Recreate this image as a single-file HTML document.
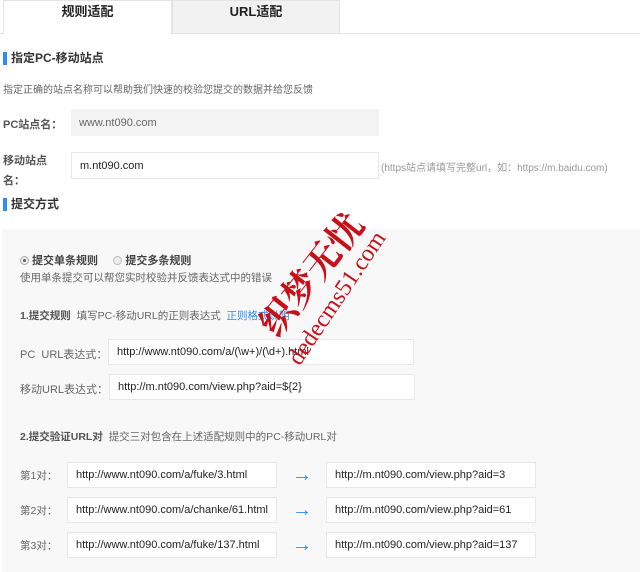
<!DOCTYPE html>
<html><head><meta charset="utf-8"><style>
*{margin:0;padding:0;box-sizing:border-box}
body{width:640px;height:572px;background:#fff;font-family:"Liberation Sans","Noto Sans CJK SC",sans-serif;color:#333;position:relative;overflow:hidden;font-size:11px}
.a{position:absolute;white-space:nowrap}
.tab{position:absolute;top:0;height:34px;text-align:center;line-height:22px;font-size:13px;font-weight:bold;color:#222}
.inp{position:absolute;background:#fff;border:1px solid #e8e8e8;font-size:11px;color:#222;padding-left:8px;display:flex;align-items:center}
.h{position:absolute;font-size:12px;font-weight:bold;color:#333;border-left:4px solid #2a8ff0;padding-left:4px;line-height:13px}
.g{color:#666}
.arr{position:absolute;color:#2a8ff0;font-size:20px;font-weight:bold;line-height:20px}
</style></head><body>
<div class="a" style="left:0;top:33px;width:640px;height:1px;background:#e4e4e4"></div>
<div class="tab" style="left:3px;width:169px;background:#fff;border:1px solid #e4e4e4;border-bottom:none;height:34px">规则适配</div>
<div class="tab" style="left:172px;width:168px;background:#f2f2f2;border:1px solid #e4e4e4;height:34px">URL适配</div>

<div class="h" style="left:3px;top:52px">指定PC-移动站点</div>
<div class="a g" style="left:3px;top:81px;font-size:10px">指定正确的站点名称可以帮助我们快速的校验您提交的数据并给您反馈</div>
<div class="a" style="left:3px;top:116px;font-weight:bold;color:#555">PC站点名：</div>
<div class="inp" style="left:71px;top:109px;width:308px;height:27px;background:#f3f3f3;border:none;color:#666">www.nt090.com</div>
<div class="a" style="left:3px;top:151px;font-weight:bold;color:#555;line-height:20px">移动站点<br>名：</div>
<div class="inp" style="left:71px;top:152px;width:308px;height:27px">m.nt090.com</div>
<div class="a" style="left:381px;top:159px;font-size:10px;color:#999">(https站点请填写完整url，如：https://m.baidu.com)</div>
<div class="h" style="left:3px;top:198px">提交方式</div>

<div class="a" style="left:2px;top:229px;width:638px;height:343px;background:#f8f8f8"></div>
<div class="a" style="left:20px;top:252px;font-weight:bold;color:#444"><span style="display:inline-block;width:9px;height:9px;border:1px solid #aaa;border-radius:50%;background:radial-gradient(#666 30%,#eee 35%);vertical-align:-1px"></span> 提交单条规则 &nbsp;&nbsp;&nbsp;&nbsp;<span style="display:inline-block;width:9px;height:9px;border:1px solid #bbb;border-radius:50%;background:#eee;vertical-align:-1px"></span> 提交多条规则</div>
<div class="a g" style="left:20px;top:270px;font-size:10.5px">使用单条提交可以帮您实时校验并反馈表达式中的错误</div>
<div class="a" style="left:20px;top:308px;font-size:10.5px"><b style="color:#555">1.提交规则</b> &nbsp;<span class="g">填写PC-移动URL的正则表达式</span> &nbsp;<span style="color:#2a8ff0">正则格式说明</span></div>
<div class="a g" style="left:20px;top:346px">PC &nbsp;URL表达式：</div>
<div class="inp" style="left:108px;top:339px;width:306px;height:26px">http://www.nt090.com/a/(\w+)/(\d+).html</div>
<div class="a g" style="left:20px;top:381px">移动URL表达式：</div>
<div class="inp" style="left:109px;top:374px;width:306px;height:26px">http://m.nt090.com/view.php?aid=${2}</div>

<div class="a" style="left:20px;top:429px;font-size:10.5px"><b style="color:#555">2.提交验证URL对</b> &nbsp;<span class="g">提交三对包含在上述适配规则中的PC-移动URL对</span></div>
<div class="a g" style="left:20px;top:468px;font-size:10.5px">第1对：</div>
<div class="inp" style="left:67px;top:462px;width:210px;height:26px">http://www.nt090.com/a/fuke/3.html</div>
<div class="arr" style="left:292px;top:465px">→</div>
<div class="inp" style="left:326px;top:462px;width:210px;height:26px">http://m.nt090.com/view.php?aid=3</div>
<div class="a g" style="left:20px;top:503px;font-size:10.5px">第2对：</div>
<div class="inp" style="left:67px;top:497px;width:210px;height:26px">http://www.nt090.com/a/chanke/61.html</div>
<div class="arr" style="left:292px;top:500px">→</div>
<div class="inp" style="left:326px;top:497px;width:210px;height:26px">http://m.nt090.com/view.php?aid=61</div>
<div class="a g" style="left:20px;top:538px;font-size:10.5px">第3对：</div>
<div class="inp" style="left:67px;top:532px;width:210px;height:26px">http://www.nt090.com/a/fuke/137.html</div>
<div class="arr" style="left:292px;top:535px">→</div>
<div class="inp" style="left:326px;top:532px;width:210px;height:26px">http://m.nt090.com/view.php?aid=137</div>

<div class="a" style="left:238px;top:248px;font-size:36px;font-weight:bold;color:#c8101a;transform:rotate(-52deg);font-family:'Noto Serif CJK SC',serif">织梦无忧</div>
<div class="a" style="left:260px;top:285px;font-size:24px;color:#c8101a;transform:rotate(-56deg);font-family:'Liberation Serif',serif">dedecms51.com</div>
</body></html>
